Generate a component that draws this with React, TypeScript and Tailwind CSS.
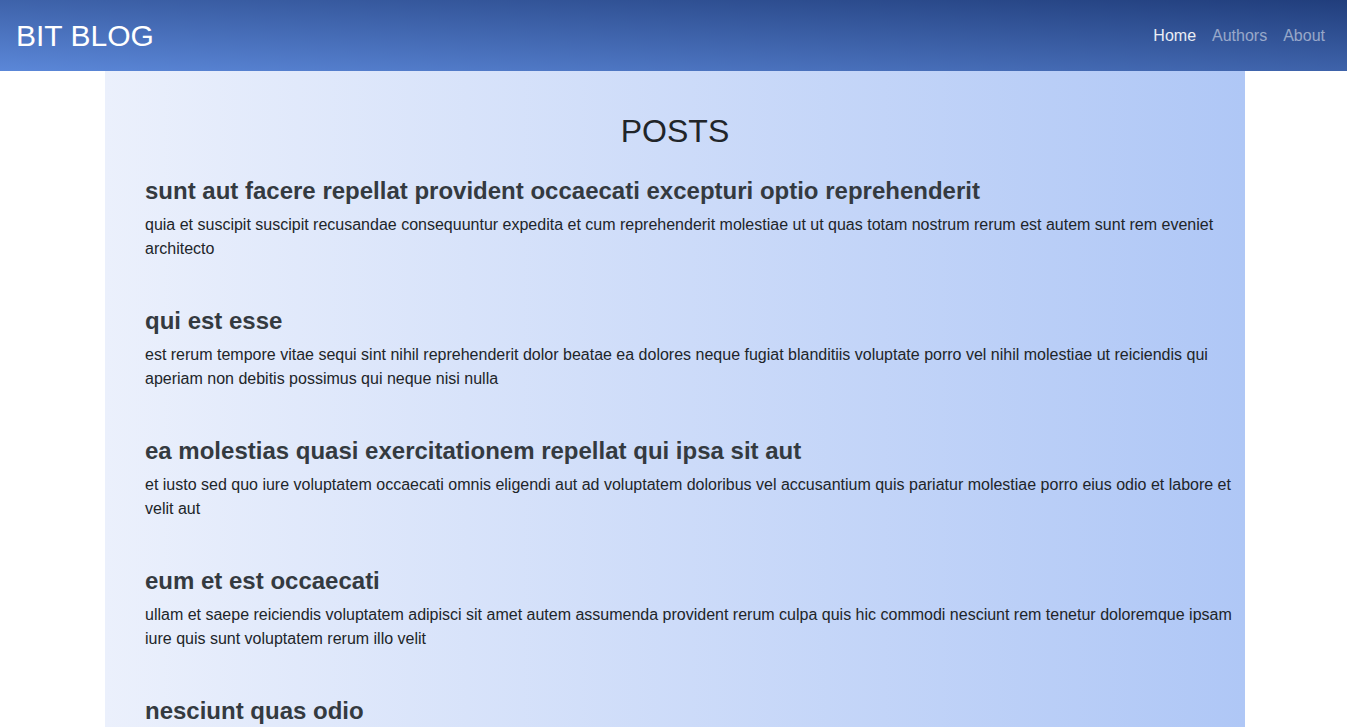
const posts = [
  {
    id: 1,
    title: "sunt aut facere repellat provident occaecati excepturi optio reprehenderit",
    body: "quia et suscipit suscipit recusandae consequuntur expedita et cum reprehenderit molestiae ut ut quas totam nostrum rerum est autem sunt rem eveniet architecto",
  },
  {
    id: 2,
    title: "qui est esse",
    body: "est rerum tempore vitae sequi sint nihil reprehenderit dolor beatae ea dolores neque fugiat blanditiis voluptate porro vel nihil molestiae ut reiciendis qui aperiam non debitis possimus qui neque nisi nulla",
  },
  {
    id: 3,
    title: "ea molestias quasi exercitationem repellat qui ipsa sit aut",
    body: "et iusto sed quo iure voluptatem occaecati omnis eligendi aut ad voluptatem doloribus vel accusantium quis pariatur molestiae porro eius odio et labore et velit aut",
  },
  {
    id: 4,
    title: "eum et est occaecati",
    body: "ullam et saepe reiciendis voluptatem adipisci sit amet autem assumenda provident rerum culpa quis hic commodi nesciunt rem tenetur doloremque ipsam iure quis sunt voluptatem rerum illo velit",
  },
  {
    id: 5,
    title: "nesciunt quas odio",
    body: "repudiandae veniam quaerat sunt sed alias aut fugiat sit autem sed est voluptatem omnis possimus esse voluptatibus quis est aut tenetur dolor neque",
  },
]

function Header() {
  return (
    <nav className="flex h-[71px] items-center justify-between pl-4 pr-[14px] bg-[linear-gradient(to_top_right,#5b87d8,#213e7c)]">
      <span className="text-[30px] leading-normal text-white">BIT BLOG</span>
      <ul className="flex text-base leading-6">
        <li className="px-2 text-white/90">Home</li>
        <li className="px-2 text-white/50">Authors</li>
        <li className="px-2 text-white/50">About</li>
      </ul>
    </nav>
  )
}

export default function App() {
  return (
    <div className="min-h-screen bg-white font-['Liberation_Sans',Arial,sans-serif]">
      <Header />
      <div className="flex justify-center pl-[3px]">
        <main className="w-[1140px] bg-[linear-gradient(to_right,#ebf0fc,#afc7f6)] pt-[41px] pl-10">
          <h1 className="mb-[27px] text-center text-[32px] leading-[1.2] text-[#212529] pr-10">POSTS</h1>
          <ul className="flex flex-col">
            {posts.map((post) => (
              <li key={post.id} className="mb-[46px]">
                <h3 className="mb-[7px] text-2xl leading-[1.2] font-bold text-[#343a40]">{post.title}</h3>
                <p className="text-base leading-6 text-[#212529]">{post.body}</p>
              </li>
            ))}
          </ul>
        </main>
      </div>
    </div>
  )
}
